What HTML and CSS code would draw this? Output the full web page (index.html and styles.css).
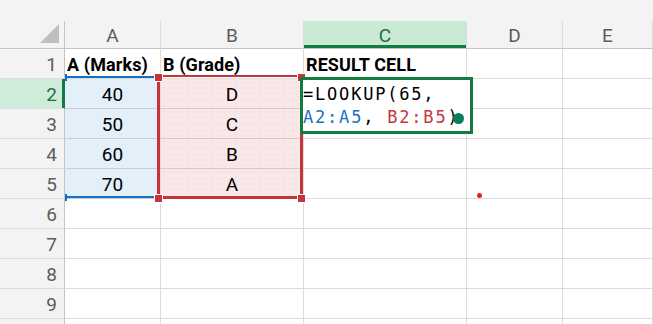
FILE: index.html
```html
<!DOCTYPE html>
<html lang="en">
<head>
<meta charset="utf-8">
<title>LOOKUP example</title>
<link rel="stylesheet" href="styles.css">
</head>
<body>
<div class="sheet">
  <div class="ribbon-edge"></div>
  <div class="grid">
    <!-- column headers -->
    <div class="corner"><svg class="corner-tri" width="19" height="19" viewBox="0 0 19 19"><polygon points="19,0 19,19 0,19" fill="#bfbfbf"/></svg></div>
    <div class="col-head">A</div>
    <div class="col-head">B</div>
    <div class="col-head col-head--active">C</div>
    <div class="col-head">D</div>
    <div class="col-head">E</div>

    <!-- row 1 -->
    <div class="row-head">1</div>
    <div class="cell cell--title">A (Marks)</div>
    <div class="cell cell--title">B (Grade)</div>
    <div class="cell cell--title">RESULT CELL</div>
    <div class="cell"></div>
    <div class="cell"></div>

    <!-- row 2 -->
    <div class="row-head row-head--active">2</div>
    <div class="cell cell--num range-a">40</div>
    <div class="cell cell--num range-b">D</div>
    <div class="cell"></div>
    <div class="cell"></div>
    <div class="cell"></div>

    <!-- row 3 -->
    <div class="row-head">3</div>
    <div class="cell cell--num range-a">50</div>
    <div class="cell cell--num range-b">C</div>
    <div class="cell"></div>
    <div class="cell"></div>
    <div class="cell"></div>

    <!-- row 4 -->
    <div class="row-head">4</div>
    <div class="cell cell--num range-a">60</div>
    <div class="cell cell--num range-b">B</div>
    <div class="cell"></div>
    <div class="cell"></div>
    <div class="cell"></div>

    <!-- row 5 -->
    <div class="row-head">5</div>
    <div class="cell cell--num range-a">70</div>
    <div class="cell cell--num range-b">A</div>
    <div class="cell"></div>
    <div class="cell"></div>
    <div class="cell"></div>

    <!-- rows 6-9, plus the top edge of the next row -->
    <div class="row-head">6</div>
    <div class="cell"></div><div class="cell"></div><div class="cell"></div><div class="cell"></div><div class="cell"></div>
    <div class="row-head">7</div>
    <div class="cell"></div><div class="cell"></div><div class="cell"></div><div class="cell"></div><div class="cell"></div>
    <div class="row-head">8</div>
    <div class="cell"></div><div class="cell"></div><div class="cell"></div><div class="cell"></div><div class="cell"></div>
    <div class="row-head">9</div>
    <div class="cell"></div><div class="cell"></div><div class="cell"></div><div class="cell"></div><div class="cell"></div>
    <div class="row-head"></div>
    <div class="cell"></div><div class="cell"></div><div class="cell"></div><div class="cell"></div><div class="cell"></div>
  </div>

  <!-- formula reference highlights -->
  <div class="ref ref-a"></div>
  <div class="ref ref-b">
    <span class="handle handle--tl"></span>
    <span class="handle handle--tr"></span>
    <span class="handle handle--bl"></span>
    <span class="handle handle--br"></span>
  </div>

  <!-- in-cell editor for C2 -->
  <div class="editor">
    <div class="editor-line">=LOOKUP(65,</div>
    <div class="editor-line"><span class="tok-a">A2:A5</span>, <span class="tok-b">B2:B5</span>)</div>
    <span class="editor-caret"></span>
  </div>

  <span class="pointer-dot"></span>
</div>
</body>
</html>
```
FILE: styles.css
```css
* {
  box-sizing: border-box;
}

html, body {
  margin: 0;
  padding: 0;
  background: #ffffff;
  overflow: hidden;
}

.sheet {
  position: relative;
  width: 653px;
  height: 324px;
  overflow: hidden;
  font-family: Roboto, "Liberation Sans", sans-serif;
}

.ribbon-edge {
  height: 21px;
  background: #f3f3f3;
}

.grid {
  display: grid;
  grid-template-columns: 65px 96px 143px 163px 96px 1fr;
  grid-template-rows: 28px repeat(10, 30px);
}

/* header cells */
.corner {
  background: #f3f3f3;
  border-right: 1px solid #c4c4c4;
  border-bottom: 1px solid #c4c4c4;
  display: flex;
  justify-content: flex-end;
  align-items: flex-end;
  padding: 0 5px 5px 0;
}

.corner-tri {
  display: block;
}

.col-head {
  background: #f3f3f3;
  border-right: 1px solid #dcdcdc;
  border-bottom: 1px solid #c4c4c4;
  display: flex;
  align-items: center;
  justify-content: center;
  font-size: 19px;
  color: #5c5c5c;
  padding-top: 1px;
}

.col-head--active {
  background: #caead6;
  color: #1c6e43;
  box-shadow: inset 0 -3px 0 #107c41;
}

.row-head {
  background: #f3f3f3;
  border-right: 1px solid #c4c4c4;
  border-bottom: 1px solid #dcdcdc;
  text-align: right;
  padding: 2px 7px 0 0;
  font-size: 19px;
  line-height: 28px;
  color: #5c5c5c;
}

.row-head--active {
  background: #cfebd9;
  color: #1c6e43;
  box-shadow: inset -2px 0 0 #107c41;
  border-right-color: #107c41;
}

/* body cells */
.cell {
  border-right: 1px solid #dcdcdc;
  border-bottom: 1px solid #dcdcdc;
  padding: 2px 0 0 2px;
  font-size: 19px;
  line-height: 28px;
  color: #000000;
  white-space: nowrap;
}

.cell--title {
  font-weight: 700;
  font-size: 18px;
  letter-spacing: 0.1px;
}

.cell--num {
  text-align: center;
  padding-left: 0;
}

.range-a {
  background: #e3eff9;
  border-bottom-color: #c9ced6;
}

.range-b {
  background-color: #f9e8e8;
  background-image: radial-gradient(circle, rgba(214, 160, 160, 0.18) 0.6px, transparent 0.9px);
  background-size: 6px 6px;
  border-bottom-color: #dbc8c8;
}

/* reference outlines drawn over the cells */
.ref {
  position: absolute;
}

.ref-a {
  left: 65px;
  top: 76px;
  width: 92px;
  height: 122px;
  border-top: 2px solid #1570c1;
  border-bottom: 2px solid #1570c1;
}

.ref-a::before,
.ref-a::after {
  content: "";
  position: absolute;
  left: 0;
  width: 2px;
  height: 7px;
  background: #1570c1;
}

.ref-a::before {
  top: -4px;
}

.ref-a::after {
  bottom: -5px;
}

.ref-b {
  left: 157px;
  top: 75px;
  width: 146px;
  height: 124px;
  border: 3px solid #c3343b;
  border-top-width: 2px;
}

.handle {
  position: absolute;
  width: 7px;
  height: 7px;
  background: #c3343b;
  box-shadow: 0 0 0 1px #ffffff;
}

.handle--tl { left: -5px; top: -3px; }
.handle--tr { right: -5px; top: -3px; }
.handle--bl { left: -5px; bottom: -6px; }
.handle--br { right: -5px; bottom: -6px; }

/* cell editor */
.editor {
  position: absolute;
  left: 300px;
  top: 77px;
  width: 173px;
  height: 57px;
  background: #ffffff;
  border: 3px solid #107c41;
  padding: 3px 0 0 0;
  font-family: "DejaVu Sans Mono", "Liberation Mono", monospace;
  font-size: 17px;
  line-height: 23px;
  letter-spacing: 1.8px;
  color: #000000;
  white-space: nowrap;
}

.tok-a {
  color: #1a72c4;
}

.tok-b {
  color: #c6373c;
}

.editor-caret {
  position: absolute;
  left: 150px;
  top: 33px;
  width: 11px;
  height: 11px;
  border-radius: 50%;
  background: #0c7c60;
}

.pointer-dot {
  position: absolute;
  left: 477px;
  top: 193px;
  width: 5px;
  height: 5px;
  border-radius: 50%;
  background: #e5201f;
}
```
